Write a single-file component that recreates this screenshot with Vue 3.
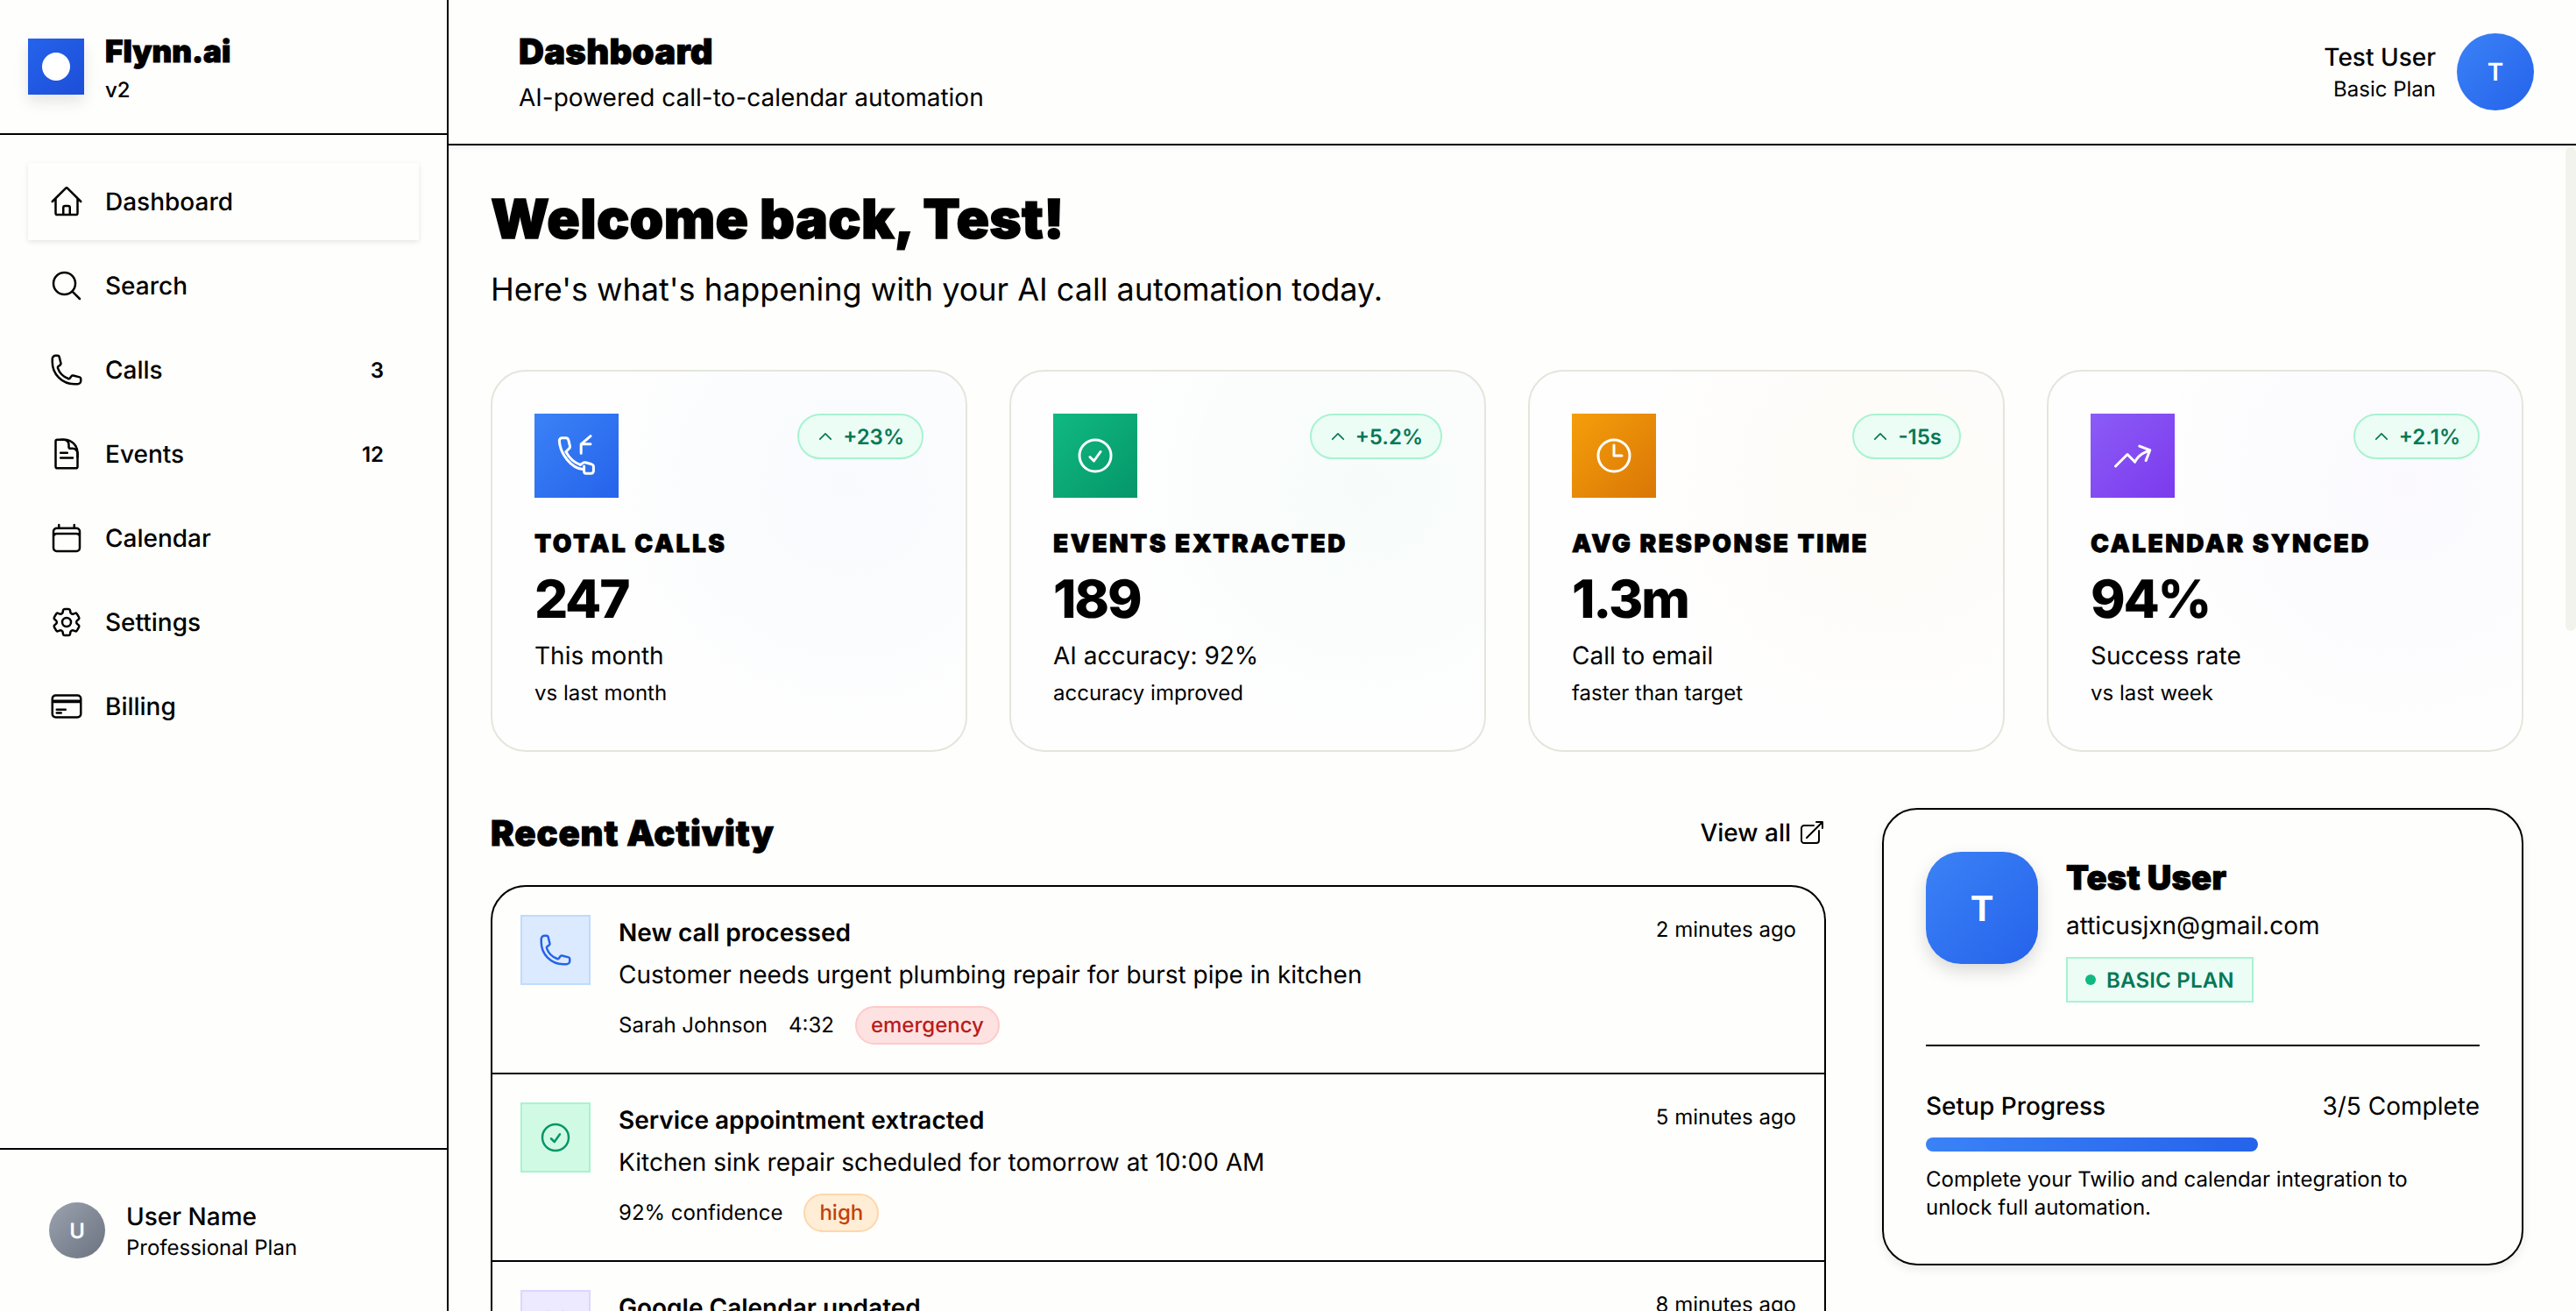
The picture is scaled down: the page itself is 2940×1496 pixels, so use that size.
<template>
  <div class="app">
    <aside class="sidebar">
      <div class="brand">
        <div class="logo"><span class="logo-dot"></span></div>
        <div class="brand-text">
          <div class="brand-name">Flynn.ai</div>
          <div class="brand-version">v2</div>
        </div>
      </div>
      <nav class="nav">
        <a v-for="item in navItems" :key="item.label" class="nav-item" :class="{ active: item.active }">
          <svg class="nav-icon" viewBox="0 0 24 24"><path v-for="d in item.paths" :key="d" :d="d" /></svg>
          <span class="nav-label">{{ item.label }}</span>
          <span v-if="item.count" class="nav-count">{{ item.count }}</span>
        </a>
      </nav>
      <div class="side-user">
        <div class="side-avatar">U</div>
        <div>
          <div class="side-name">User Name</div>
          <div class="side-plan">Professional Plan</div>
        </div>
      </div>
    </aside>

    <div class="content">
      <header class="topbar">
        <div class="topbar-text">
          <h1 class="page-title">Dashboard</h1>
          <p class="page-sub">AI-powered call-to-calendar automation</p>
        </div>
        <div class="top-user">
          <div class="top-user-text">
            <div class="top-name">Test User</div>
            <div class="top-plan">Basic Plan</div>
          </div>
          <div class="top-avatar">T</div>
        </div>
      </header>

      <main class="main">
        <div class="scroll-thumb"></div>
        <h2 class="welcome">Welcome back, Test!</h2>
        <p class="welcome-sub">Here's what's happening with your AI call automation today.</p>

        <section class="stats">
          <div v-for="stat in stats" :key="stat.title" class="stat-card" :class="stat.tone">
            <div class="stat-top">
              <div class="stat-icon">
                <svg viewBox="0 0 24 24"><path v-for="d in stat.paths" :key="d" :d="d" /></svg>
              </div>
              <div class="trend">
                <svg viewBox="0 0 24 24"><path d="m4.5 15.75 7.5-7.5 7.5 7.5" /></svg>
                <span>{{ stat.trend }}</span>
              </div>
            </div>
            <div class="stat-title">{{ stat.title }}</div>
            <div class="stat-value">{{ stat.value }}</div>
            <div class="stat-desc">{{ stat.desc }}</div>
            <div class="stat-note">{{ stat.note }}</div>
          </div>
        </section>

        <section class="lower">
          <div>
            <div class="section-head">
              <h3 class="section-title">Recent Activity</h3>
              <a class="view-all">
                View all
                <svg viewBox="0 0 24 24"><path d="M13.5 6H5.25A2.25 2.25 0 0 0 3 8.25v10.5A2.25 2.25 0 0 0 5.25 21h10.5A2.25 2.25 0 0 0 18 18.75V10.5m-10.5 6L21 3m0 0h-5.25M21 3v5.25" /></svg>
              </a>
            </div>
            <div class="activity">
              <div v-for="row in activity" :key="row.title" class="activity-row">
                <div class="activity-icon" :class="row.tone">
                  <svg viewBox="0 0 24 24"><path v-for="d in row.paths" :key="d" :d="d" /></svg>
                </div>
                <div class="activity-body">
                  <div class="activity-title">{{ row.title }}</div>
                  <div class="activity-desc">{{ row.desc }}</div>
                  <div class="activity-meta">
                    <span v-for="m in row.meta" :key="m">{{ m }}</span>
                    <span v-if="row.tag" class="tag" :class="row.tag">{{ row.tag }}</span>
                  </div>
                </div>
                <div class="activity-time">{{ row.time }}</div>
              </div>
            </div>
          </div>

          <div class="profile">
            <div class="profile-top">
              <div class="profile-avatar">T</div>
              <div>
                <div class="profile-name">Test User</div>
                <div class="profile-email">atticusjxn@gmail.com</div>
                <div class="plan-badge"><span class="plan-dot"></span>BASIC PLAN</div>
              </div>
            </div>
            <div class="progress-head">
              <span class="progress-label">Setup Progress</span>
              <span class="progress-count">3/5 Complete</span>
            </div>
            <div class="progress-track"><div class="progress-fill" :style="{ width: progress + '%' }"></div></div>
            <p class="progress-note">Complete your Twilio and calendar integration to unlock full automation.</p>
          </div>
        </section>
      </main>
    </div>
  </div>
</template>

<script setup>
const home = ['m2.25 12 8.954-8.955c.44-.439 1.152-.439 1.591 0L21.75 12M4.5 9.75v10.125c0 .621.504 1.125 1.125 1.125H9.75v-4.875c0-.621.504-1.125 1.125-1.125h2.25c.621 0 1.125.504 1.125 1.125V21h4.125c.621 0 1.125-.504 1.125-1.125V9.75M8.25 21h8.25']
const search = ['m21 21-5.197-5.197m0 0A7.5 7.5 0 1 0 5.196 5.196a7.5 7.5 0 0 0 10.607 10.607Z']
const phone = ['M2.25 6.75c0 8.284 6.716 15 15 15h2.25a2.25 2.25 0 0 0 2.25-2.25v-1.372c0-.516-.351-.966-.852-1.091l-4.423-1.106c-.44-.11-.902.055-1.173.417l-.97 1.293c-.282.376-.769.542-1.21.38a12.035 12.035 0 0 1-7.143-7.143c-.162-.441.004-.928.38-1.21l1.293-.97c.363-.271.527-.734.417-1.173L6.963 3.102a1.125 1.125 0 0 0-1.091-.852H4.5A2.25 2.25 0 0 0 2.25 4.5v2.25Z']
const doc = ['M19.5 14.25v-2.625a3.375 3.375 0 0 0-3.375-3.375h-1.5A1.125 1.125 0 0 1 13.5 7.125v-1.5a3.375 3.375 0 0 0-3.375-3.375H8.25', 'M7.9 11.25h4.6M7.9 14.75h8.3', 'M10.5 2.25H5.625c-.621 0-1.125.504-1.125 1.125v17.25c0 .621.504 1.125 1.125 1.125h12.75c.621 0 1.125-.504 1.125-1.125V11.25a9 9 0 0 0-9-9Z']
const calendar = ['M6.75 3v2.25M17.25 3v2.25M3 18.75V7.5a2.25 2.25 0 0 1 2.25-2.25h13.5A2.25 2.25 0 0 1 21 7.5v11.25m-18 0A2.25 2.25 0 0 0 5.25 21h13.5A2.25 2.25 0 0 0 21 18.75m-18 0v-7.5A2.25 2.25 0 0 1 5.25 9h13.5A2.25 2.25 0 0 1 21 11.25v7.5']
const cog = ['M9.594 3.94c.09-.542.56-.94 1.11-.94h2.593c.55 0 1.02.398 1.11.94l.213 1.281c.063.374.313.686.645.87.074.04.147.083.22.127.325.196.72.257 1.075.124l1.217-.456a1.125 1.125 0 0 1 1.37.49l1.296 2.247a1.125 1.125 0 0 1-.26 1.431l-1.003.827c-.293.241-.438.613-.43.992a7.723 7.723 0 0 1 0 .255c-.008.378.137.75.43.991l1.004.827c.424.35.534.955.26 1.43l-1.298 2.247a1.125 1.125 0 0 1-1.369.491l-1.217-.456c-.355-.133-.75-.072-1.076.124a6.47 6.47 0 0 1-.22.128c-.331.183-.581.495-.644.869l-.213 1.281c-.09.543-.56.94-1.11.94h-2.594c-.55 0-1.019-.398-1.11-.94l-.213-1.281c-.062-.374-.312-.686-.644-.87a6.52 6.52 0 0 1-.22-.127c-.325-.196-.72-.257-1.076-.124l-1.217.456a1.125 1.125 0 0 1-1.369-.49l-1.297-2.247a1.125 1.125 0 0 1 .26-1.431l1.004-.827c.292-.24.437-.613.43-.991a6.932 6.932 0 0 1 0-.255c.007-.38-.138-.751-.43-.992l-1.004-.827a1.125 1.125 0 0 1-.26-1.43l1.297-2.247a1.125 1.125 0 0 1 1.37-.491l1.216.456c.356.133.751.072 1.076-.124.072-.044.146-.086.22-.128.332-.183.582-.495.644-.869l.214-1.28Z', 'M15 12a3 3 0 1 1-6 0 3 3 0 0 1 6 0Z']
const card = ['M2.25 8.25h19.5M2.25 9h19.5m-16.5 5.25h6m-6 2.25h3m-3.75 3h15a2.25 2.25 0 0 0 2.25-2.25V6.75A2.25 2.25 0 0 0 19.5 4.5h-15a2.25 2.25 0 0 0-2.25 2.25v10.5A2.25 2.25 0 0 0 4.5 19.5Z']
const check = ['M9 12.75 11.25 15 15 9.75M21 12a9 9 0 1 1-18 0 9 9 0 0 1 18 0Z']
const clock = ['M12 6v6h4.5m4.5 0a9 9 0 1 1-18 0 9 9 0 0 1 18 0Z']
const trending = ['M2.25 18 9 11.25l4.306 4.306a11.95 11.95 0 0 1 5.814-5.518l2.74-1.22m0 0-5.94-2.281m5.94 2.28-2.28 5.941']
const phoneIn = ['M2.2 3.4c0-.9.7-1.5 1.5-1.5h2.1c.8 0 1.4.5 1.6 1.2l.8 3.2c.2.8-.1 1.5-.8 2L6 9.8', 'M2.2 3.4C2.6 11 9 19.2 15.8 19.8', 'M6 9.8c1.5 3 4.5 6 8.2 7.4', 'M14.2 17.2l1.4-1c.4-.3 1-.4 1.5-.3l3.6 1c.6.2 1 .7 1 1.3v2.6c0 .7-.6 1.3-1.3 1.3h-3c-.7 0-1.1-.5-1.1-1.2V18', 'M20 .8 14.6 5.4v5.2M14.6 5.4H20']

const navItems = [
  { label: 'Dashboard', paths: home, active: true },
  { label: 'Search', paths: search },
  { label: 'Calls', paths: phone, count: 3 },
  { label: 'Events', paths: doc, count: 12 },
  { label: 'Calendar', paths: calendar },
  { label: 'Settings', paths: cog },
  { label: 'Billing', paths: card }
]

const stats = [
  { title: 'TOTAL CALLS', value: '247', desc: 'This month', note: 'vs last month', trend: '+23%', tone: 'blue', paths: phoneIn },
  { title: 'EVENTS EXTRACTED', value: '189', desc: 'AI accuracy: 92%', note: 'accuracy improved', trend: '+5.2%', tone: 'green', paths: check },
  { title: 'AVG RESPONSE TIME', value: '1.3m', desc: 'Call to email', note: 'faster than target', trend: '-15s', tone: 'amber', paths: clock },
  { title: 'CALENDAR SYNCED', value: '94%', desc: 'Success rate', note: 'vs last week', trend: '+2.1%', tone: 'purple', paths: trending }
]

const activity = [
  { title: 'New call processed', desc: 'Customer needs urgent plumbing repair for burst pipe in kitchen', meta: ['Sarah Johnson', '4:32'], tag: 'emergency', time: '2 minutes ago', tone: 'blue', paths: phone },
  { title: 'Service appointment extracted', desc: 'Kitchen sink repair scheduled for tomorrow at 10:00 AM', meta: ['92% confidence'], tag: 'high', time: '5 minutes ago', tone: 'green', paths: check },
  { title: 'Google Calendar updated', desc: 'New event added to your primary calendar', meta: [], time: '8 minutes ago', tone: 'purple', paths: calendar }
]

const progress = 60
</script>

<style>
html, body {
  margin: 0;
  overflow: hidden;
  background: #fefefc;
}
</style>

<style scoped>
* {
  box-sizing: border-box;
}

.app {
  display: flex;
  height: 100vh;
  overflow: hidden;
  background: #fefefc;
  color: #000;
  font-family: Inter, "Noto Sans", sans-serif;
  text-rendering: geometricPrecision;
}

.sidebar {
  width: 512px;
  flex-shrink: 0;
  display: flex;
  flex-direction: column;
  border-right: 2px solid #000;
}

.brand {
  height: 154px;
  padding: 0 32px;
  display: flex;
  align-items: center;
  gap: 24px;
  border-bottom: 2px solid #000;
}

.logo {
  width: 64px;
  height: 64px;
  display: flex;
  align-items: center;
  justify-content: center;
  background: linear-gradient(135deg, #2563eb, #1d4ed8);
  box-shadow: 0 8px 16px rgba(0, 0, 0, 0.1);
}

.logo-dot {
  width: 32px;
  height: 32px;
  border-radius: 50%;
  background: #fff;
}

.brand-text {
  padding-top: 4px;
}

.brand-name {
  font-weight: 900;
  font-size: 35px;
  line-height: 44px;
  -webkit-text-stroke: 1px #000;
}

.brand-version {
  margin-top: 6px;
  font-size: 24px;
  font-weight: 500;
  line-height: 32px;
}

.nav {
  flex: 1;
  padding: 32px;
  display: flex;
  flex-direction: column;
  gap: 8px;
}

.nav-item {
  height: 88px;
  padding: 0 40px 0 24px;
  display: flex;
  align-items: center;
  gap: 24px;
}

.nav-item.active {
  box-shadow: 0 2px 6px rgba(0, 0, 0, 0.1);
}

.nav-icon {
  width: 40px;
  height: 40px;
  fill: none;
  stroke: #000;
  stroke-width: 1.5;
  stroke-linecap: round;
  stroke-linejoin: round;
}

.nav-label {
  flex: 1;
  font-size: 28px;
  font-weight: 500;
}

.nav-count {
  font-size: 24px;
  font-weight: 600;
}

.side-user {
  height: 186px;
  padding: 0 56px;
  display: flex;
  align-items: center;
  gap: 24px;
  border-top: 2px solid #000;
}

.side-avatar {
  width: 64px;
  height: 64px;
  border-radius: 50%;
  display: flex;
  align-items: center;
  justify-content: center;
  background: linear-gradient(135deg, #9ca3af, #6b7280);
  color: #fff;
  font-size: 24px;
  font-weight: 600;
}

.side-name {
  font-size: 28px;
  font-weight: 500;
  line-height: 38px;
}

.side-plan {
  margin-top: 1px;
  font-size: 24px;
  line-height: 32px;
}

.content {
  flex: 1;
  min-width: 0;
  display: flex;
  flex-direction: column;
}

.topbar {
  height: 166px;
  flex-shrink: 0;
  padding: 0 48px 0 80px;
  display: flex;
  align-items: center;
  justify-content: space-between;
  border-bottom: 2px solid #000;
  box-shadow: 0 2px 6px rgba(0, 0, 0, 0.06);
  position: relative;
}

.topbar-text {
  padding-top: 2px;
}

.page-title {
  margin: 0;
  font-weight: 900;
  font-size: 40px;
  line-height: 48px;
  letter-spacing: 0.3px;
  -webkit-text-stroke: 1px #000;
}

.page-sub {
  margin: 8px 0 0;
  font-size: 28px;
  line-height: 40px;
}

.top-user {
  display: flex;
  align-items: center;
  gap: 24px;
}

.top-user-text {
  text-align: right;
}

.top-name {
  font-size: 28px;
  font-weight: 500;
  line-height: 38px;
}

.top-plan {
  margin-top: 2px;
  font-size: 24px;
  line-height: 32px;
}

.top-avatar {
  width: 88px;
  height: 88px;
  border-radius: 50%;
  display: flex;
  align-items: center;
  justify-content: center;
  background: linear-gradient(135deg, #3b82f6, #2563eb);
  color: #fff;
  font-size: 28px;
  font-weight: 600;
}

.main {
  flex: 1;
  min-height: 0;
  position: relative;
  overflow: hidden;
  padding: 48px 60px 48px 48px;
}

.scroll-thumb {
  position: absolute;
  top: 2px;
  right: 0;
  width: 12px;
  height: 552px;
  border-radius: 6px;
  background: #f3f3ee;
}

.welcome {
  margin: 0;
  font-weight: 900;
  font-size: 62px;
  line-height: 72px;
  letter-spacing: 0.3px;
  -webkit-text-stroke: 1.4px #000;
}

.welcome-sub {
  margin: 20px 0 0;
  font-size: 36px;
  line-height: 48px;
}

.stats {
  margin-top: 68px;
  display: grid;
  grid-template-columns: repeat(4, 1fr);
  gap: 48px;
}

.stat-card {
  height: 436px;
  padding: 48px;
  border: 2px solid #e5e5dc;
  border-radius: 40px;
}

.stat-card.blue {
  background: radial-gradient(circle at 75% 30%, rgba(59, 130, 246, 0.03), transparent 58%), #fefefe;
}

.stat-card.green {
  background: radial-gradient(circle at 75% 30%, rgba(16, 185, 129, 0.03), transparent 58%), #fefefe;
}

.stat-card.amber {
  background: radial-gradient(circle at 75% 30%, rgba(245, 158, 11, 0.03), transparent 58%), #fefefe;
}

.stat-card.purple {
  background: radial-gradient(circle at 75% 30%, rgba(139, 92, 246, 0.03), transparent 58%), #fefefe;
}

.stat-top {
  display: flex;
  justify-content: space-between;
  align-items: flex-start;
}

.stat-icon {
  width: 96px;
  height: 96px;
  display: flex;
  align-items: center;
  justify-content: center;
}

.blue .stat-icon {
  background: linear-gradient(135deg, #3b82f6, #2563eb);
}

.green .stat-icon {
  background: linear-gradient(135deg, #10b981, #059669);
}

.amber .stat-icon {
  background: linear-gradient(135deg, #f59e0b, #d97706);
}

.purple .stat-icon {
  background: linear-gradient(135deg, #8b5cf6, #7c3aed);
}

.stat-icon svg {
  width: 48px;
  height: 48px;
  fill: none;
  stroke: #fff;
  stroke-width: 1.5;
  stroke-linecap: round;
  stroke-linejoin: round;
}

.trend {
  height: 52px;
  padding: 0 20px;
  display: flex;
  align-items: center;
  gap: 10px;
  border: 2px solid #a7f3d0;
  border-radius: 26px;
  background: #ecfdf5;
  color: #047857;
  font-size: 24px;
  font-weight: 600;
}

.trend svg {
  width: 20px;
  height: 20px;
  fill: none;
  stroke: currentColor;
  stroke-width: 2;
  stroke-linecap: round;
  stroke-linejoin: round;
}

.stat-title {
  margin-top: 34px;
  font-weight: 900;
  font-size: 28px;
  line-height: 36px;
  letter-spacing: 2.5px;
  -webkit-text-stroke: 0.8px #000;
}

.stat-value {
  margin-top: 12px;
  font-size: 60px;
  font-weight: 800;
  line-height: 68px;
  letter-spacing: -2.2px;
}

.stat-desc {
  margin-top: 10px;
  font-size: 28px;
  line-height: 40px;
}

.stat-note {
  margin-top: 5px;
  font-size: 24px;
  line-height: 36px;
}

.lower {
  margin-top: 64px;
  display: grid;
  grid-template-columns: 1fr 732px;
  gap: 64px;
  align-items: start;
}

.section-head {
  height: 56px;
  margin-bottom: 32px;
  display: flex;
  align-items: center;
  justify-content: space-between;
}

.section-title {
  margin: 0;
  font-weight: 900;
  font-size: 40px;
  letter-spacing: 0.9px;
  -webkit-text-stroke: 1px #000;
}

.view-all {
  display: flex;
  align-items: center;
  gap: 8px;
  font-size: 28px;
  font-weight: 500;
}

.view-all svg {
  width: 32px;
  height: 32px;
  fill: none;
  stroke: #000;
  stroke-width: 1.5;
  stroke-linecap: round;
  stroke-linejoin: round;
}

.activity {
  border: 2px solid #000;
  border-radius: 40px;
  overflow: hidden;
}

.activity-row {
  height: 214px;
  padding: 32px;
  display: flex;
  gap: 32px;
  border-bottom: 2px solid #000;
}

.activity-icon {
  width: 80px;
  height: 80px;
  flex-shrink: 0;
  display: flex;
  align-items: center;
  justify-content: center;
  border: 2px solid;
}

.activity-icon svg {
  width: 40px;
  height: 40px;
  fill: none;
  stroke: currentColor;
  stroke-width: 1.5;
  stroke-linecap: round;
  stroke-linejoin: round;
}

.activity-icon.blue {
  background: #dbeafe;
  border-color: #bfdbfe;
  color: #2563eb;
}

.activity-icon.green {
  background: #d1fae5;
  border-color: #a7f3d0;
  color: #059669;
}

.activity-icon.purple {
  background: #ede9fe;
  border-color: #ddd6fe;
  color: #7c3aed;
}

.activity-body {
  flex: 1;
  min-width: 0;
}

.activity-title {
  font-size: 28px;
  font-weight: 600;
  line-height: 40px;
}

.activity-desc {
  margin-top: 8px;
  font-size: 28px;
  line-height: 40px;
}

.activity-meta {
  margin-top: 16px;
  display: flex;
  align-items: center;
  gap: 24px;
  font-size: 24px;
  line-height: 44px;
}

.tag {
  height: 44px;
  padding: 0 16px;
  display: flex;
  align-items: center;
  border: 2px solid;
  border-radius: 22px;
  font-weight: 500;
}

.tag.emergency {
  background: #fee2e2;
  border-color: #fecaca;
  color: #b91c1c;
}

.tag.high {
  background: #ffedd5;
  border-color: #fed7aa;
  color: #c2410c;
}

.activity-time {
  font-size: 24px;
  line-height: 34px;
}

.profile {
  height: 522px;
  padding: 48px;
  border: 2px solid #000;
  border-radius: 40px;
  box-shadow: 0 4px 12px rgba(0, 0, 0, 0.08);
}

.profile-top {
  display: flex;
  gap: 32px;
  padding-bottom: 48px;
  border-bottom: 2px solid #000;
}

.profile-avatar {
  width: 128px;
  height: 128px;
  flex-shrink: 0;
  border-radius: 40px;
  display: flex;
  align-items: center;
  justify-content: center;
  background: linear-gradient(135deg, #3b82f6, #2563eb);
  box-shadow: 0 8px 20px rgba(0, 0, 0, 0.15);
  color: #fff;
  font-size: 40px;
  font-weight: 700;
}

.profile-name {
  margin-top: 6px;
  font-weight: 900;
  font-size: 38px;
  line-height: 48px;
  letter-spacing: 0.3px;
  -webkit-text-stroke: 1px #000;
}

.profile-email {
  margin-top: 10px;
  font-size: 28px;
  line-height: 40px;
}

.plan-badge {
  margin-top: 16px;
  width: fit-content;
  height: 52px;
  padding: 0 20px;
  display: flex;
  align-items: center;
  gap: 12px;
  border: 2px solid #a7f3d0;
  background: #ecfdf5;
  color: #047857;
  font-size: 24px;
  font-weight: 600;
  letter-spacing: 0.2px;
}

.plan-dot {
  width: 12px;
  height: 12px;
  border-radius: 50%;
  background: #10b981;
}

.progress-head {
  margin-top: 48px;
  display: flex;
  justify-content: space-between;
  font-size: 28px;
  line-height: 40px;
}

.progress-label {
  font-weight: 500;
}

.progress-track {
  margin-top: 16px;
  height: 16px;
}

.progress-fill {
  height: 100%;
  border-radius: 8px;
  background: linear-gradient(90deg, #3b82f6, #2563eb);
}

.progress-note {
  margin: 16px 0 0;
  max-width: 600px;
  font-size: 24px;
  line-height: 32px;
}
</style>
